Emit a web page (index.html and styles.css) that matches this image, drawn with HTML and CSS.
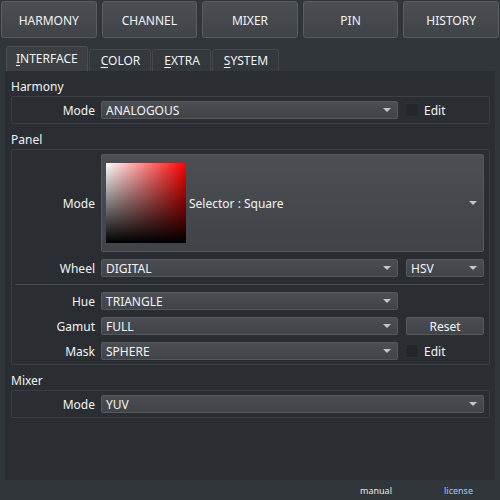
FILE: index.html
```html
<!DOCTYPE html>
<html lang="en">
<head>
  <meta charset="UTF-8">
  <title>Color Picker Settings</title>
  <link rel="stylesheet" href="styles.css">
</head>
<body>
  <div class="topbar">
    <button class="top-btn">HARMONY</button>
    <button class="top-btn">CHANNEL</button>
    <button class="top-btn">MIXER</button>
    <button class="top-btn">PIN</button>
    <button class="top-btn">HISTORY</button>
  </div>

  <div class="tabs">
    <div class="tab active"><u>I</u>NTERFACE</div>
    <div class="tab"><u>C</u>OLOR</div>
    <div class="tab"><u>E</u>XTRA</div>
    <div class="tab"><u>S</u>YSTEM</div>
  </div>

  <div class="pane">
    <div class="section-title">Harmony</div>
    <div class="group">
      <div class="row">
        <span class="label">Mode</span>
        <div class="combo"><span>ANALOGOUS</span><i class="arrow"></i></div>
        <label class="check"><span class="box"></span>Edit</label>
      </div>
    </div>

    <div class="section-title">Panel</div>
    <div class="group">
      <div class="row">
        <span class="label">Mode</span>
        <div class="combo big wide">
          <div class="swatch"></div>
          <span>Selector : Square</span>
          <i class="arrow"></i>
        </div>
      </div>
      <div class="row">
        <span class="label">Wheel</span>
        <div class="combo"><span>DIGITAL</span><i class="arrow"></i></div>
        <div class="combo"><span>HSV</span><i class="arrow"></i></div>
      </div>
      <div class="separator"></div>
      <div class="row">
        <span class="label">Hue</span>
        <div class="combo"><span>TRIANGLE</span><i class="arrow"></i></div>
      </div>
      <div class="row">
        <span class="label">Gamut</span>
        <div class="combo"><span>FULL</span><i class="arrow"></i></div>
        <button class="push">Reset</button>
      </div>
      <div class="row">
        <span class="label">Mask</span>
        <div class="combo"><span>SPHERE</span><i class="arrow"></i></div>
        <label class="check"><span class="box"></span>Edit</label>
      </div>
    </div>

    <div class="section-title">Mixer</div>
    <div class="group">
      <div class="row">
        <span class="label">Mode</span>
        <div class="combo wide"><span>YUV</span><i class="arrow"></i></div>
      </div>
    </div>
  </div>

  <div class="footer">
    <a class="link">manual</a>
    <a class="link license">license</a>
  </div>
</body>
</html>
```

FILE: styles.css
```css
body {
  margin: 0;
  background: #31363b;
  color: #f2f3f4;
  font-family: "Noto Sans", "Open Sans", sans-serif;
  font-size: 12px;
  width: 500px;
  height: 500px;
  overflow: hidden;
}
.topbar {
  display: flex;
  gap: 5px;
  padding: 1px 1px 0 1px;
}
.top-btn {
  flex: 1;
  height: 37px;
  background: linear-gradient(#4b4f54, #404448);
  border: 1px solid #5a5e63;
  border-radius: 3px;
  color: #f2f3f4;
  font-family: inherit;
  font-size: 12px;
  padding: 2px 0 0 0;
}
.tabs {
  display: flex;
  align-items: flex-end;
  gap: 1px;
  margin: 8px 0 0 6px;
  height: 25px;
}
.tab {
  height: 22px;
  line-height: 22px;
  padding: 0 10px 0 11px;
  box-sizing: border-box;
  background: #33383c;
  border: 1px solid #45494e;
  border-bottom: none;
  border-radius: 3px 3px 0 0;
}
.tab.active {
  height: 25px;
  line-height: 24px;
  padding: 0 9px;
  background: #3c4044;
  border-color: #4d5156;
}
.tab u { text-decoration-thickness: 1px; text-underline-offset: 2px; }
.pane {
  margin: 0 5px;
  height: 409px;
  background: #2a2e32;
  padding: 5px 5px 0 6px;
  box-sizing: border-box;
}
.section-title {
  height: 20px;
  line-height: 22px;
}
.group {
  border: 1px solid #3b3f43;
  border-radius: 2px;
  padding: 4px 5px 4px 0;
  margin-bottom: 5px;
  display: flex;
  flex-direction: column;
  gap: 7px;
}
.row {
  display: grid;
  grid-template-columns: 83px 297px 80px;
  column-gap: 6px;
  align-items: center;
}
.row > :nth-child(3) { margin-left: 2px; }
.label {
  text-align: right;
}
.combo {
  height: 18px;
  box-sizing: border-box;
  background: linear-gradient(#4b4f53, #404448);
  border: 1px solid #55595e;
  border-radius: 2px;
  display: flex;
  align-items: center;
  padding: 0 6px 0 4px;
}
.combo span { flex: 1; white-space: nowrap; }
.combo.wide { grid-column: 2 / 4; }
.combo.big {
  height: 98px;
  padding-left: 4px;
  gap: 3px;
}
.arrow {
  width: 0;
  height: 0;
  border-left: 4px solid transparent;
  border-right: 4px solid transparent;
  border-top: 4px solid #c4c6c8;
}
.swatch {
  width: 80px;
  height: 80px;
  background:
    linear-gradient(to bottom, rgba(0,0,0,0), #000),
    linear-gradient(to right, #fff, #f00);
}
.check {
  display: flex;
  align-items: center;
  gap: 5px;
  margin-left: 1px !important;
}
.box {
  width: 14px;
  height: 14px;
  background: #24272a;
  border: 1px solid #2e3236;
  box-sizing: border-box;
}
.push {
  height: 18px;
  background: linear-gradient(#4b4f53, #404448);
  border: 1px solid #55595e;
  border-radius: 2px;
  color: #f2f3f4;
  font-family: inherit;
  font-size: 12px;
  padding: 0;
}
.separator {
  height: 1px;
  background: #4a4e52;
  margin: 0 0 0 3px;
}
.footer {
  display: flex;
  justify-content: flex-end;
  gap: 52px;
  padding-right: 27px;
  height: 20px;
  align-items: center;
  font-size: 9px;
}
.link { color: #e6e8ea; }
.license { color: #a9c9ee; }
```
